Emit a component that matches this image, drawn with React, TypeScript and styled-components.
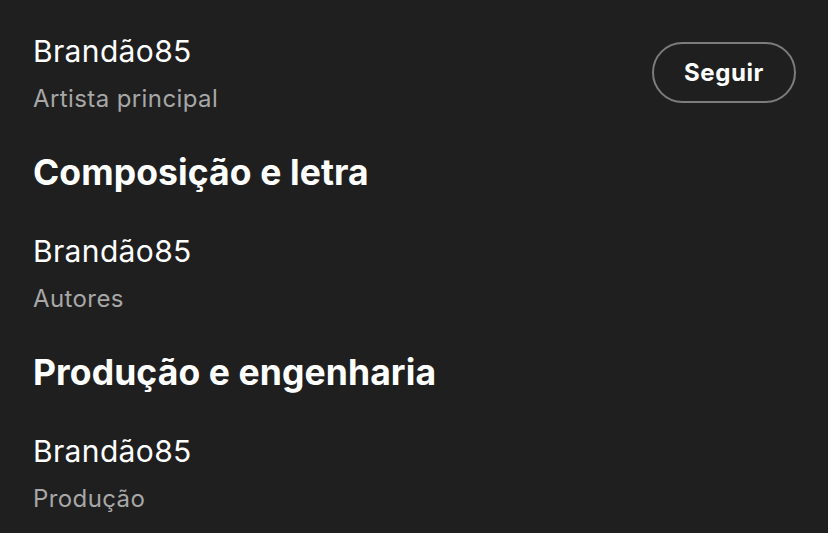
import React from "react";
import styled, { createGlobalStyle } from "styled-components";

const Global = createGlobalStyle`
  html, body { margin: 0; padding: 0; background: #1f1f1f; }
  body { font-family: Inter, "Noto Sans", sans-serif; -webkit-font-smoothing: antialiased; }
`;

const Page = styled.div`
  width: 828px;
  height: 533px;
  box-sizing: border-box;
  padding: 31px 32px 0 33px;
  background: #1f1f1f;
  overflow: hidden;
  display: flex;
  flex-direction: column;
`;

const Section = styled.section`
  display: flex;
  flex-direction: column;
  margin-top: 36px;
`;

const Heading = styled.h2`
  margin: 0 0 36px;
  font-size: 35.5px;
  line-height: 44px;
  font-weight: 700;
  color: #ffffff;
  letter-spacing: 0.1px;
`;

const Entry = styled.div`
  display: flex;
  align-items: flex-start;
  justify-content: space-between;
`;

const Info = styled.div`
  display: flex;
  flex-direction: column;
`;

const Name = styled.div`
  font-size: 30px;
  line-height: 40px;
  color: #ffffff;
  font-weight: 400;
  letter-spacing: 0.35px;
`;

const Role = styled.div`
  margin-top: 12px;
  font-size: 24px;
  line-height: 32px;
  color: #a7a7a7;
  letter-spacing: 0.4px;
`;

const FollowButton = styled.button`
  margin-top: 11px;
  width: 144px;
  height: 61px;
  box-sizing: border-box;
  border: 2px solid #7c7c7c;
  border-radius: 31px;
  background: transparent;
  color: #ffffff;
  font-family: Inter, "Noto Sans", sans-serif;
  font-size: 24px;
  font-weight: 700;
  letter-spacing: 0.6px;
  cursor: pointer;
`;

type Credit = { name: string; role: string; follow?: boolean };

const CreditEntry = ({ name, role, follow }: Credit) => (
  <Entry>
    <Info>
      <Name>{name}</Name>
      <Role>{role}</Role>
    </Info>
    {follow && <FollowButton>Seguir</FollowButton>}
  </Entry>
);

const sections: { title: string; credits: Credit[] }[] = [
  { title: "Composição e letra", credits: [{ name: "Brandão85", role: "Autores" }] },
  { title: "Produção e engenharia", credits: [{ name: "Brandão85", role: "Produção" }] },
];

export default function App() {
  return (
    <>
      <Global />
      <Page>
        <CreditEntry name="Brandão85" role="Artista principal" follow />
        {sections.map((s) => (
          <Section key={s.title}>
            <Heading>{s.title}</Heading>
            {s.credits.map((c, i) => (
              <CreditEntry key={i} {...c} />
            ))}
          </Section>
        ))}
      </Page>
    </>
  );
}
